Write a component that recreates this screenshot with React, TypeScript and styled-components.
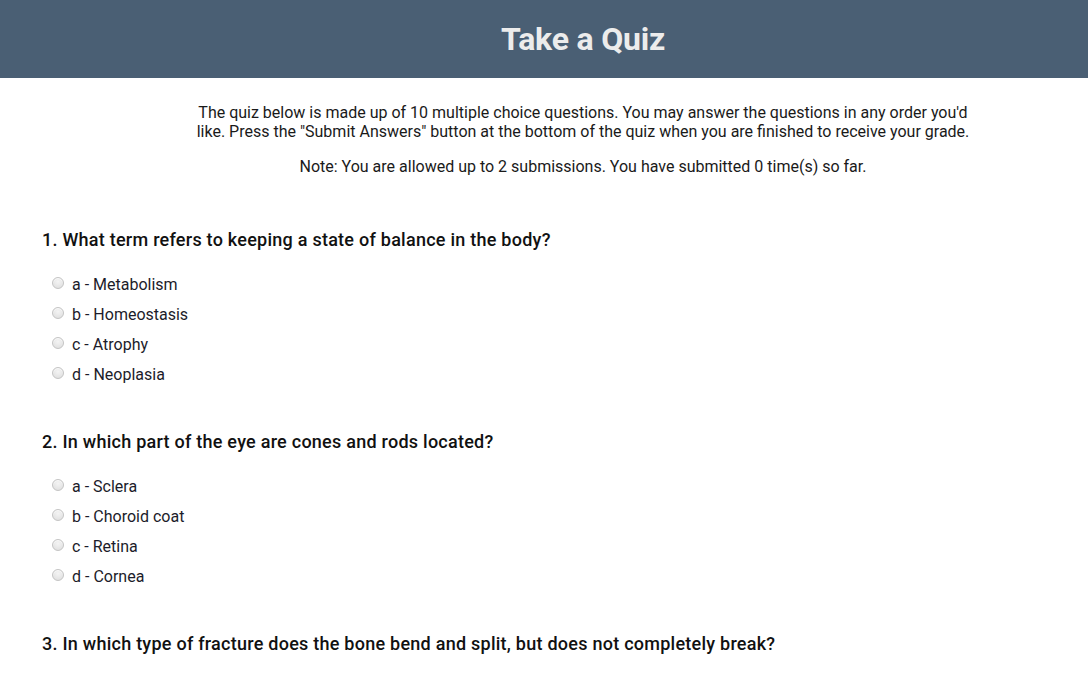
import React from "react";
import styled, { createGlobalStyle } from "styled-components";

// Data

type Question = {
  id: number;
  text: string;
  options: string[];
};

const questions: Question[] = [
  {
    id: 1,
    text: "What term refers to keeping a state of balance in the body?",
    options: ["Metabolism", "Homeostasis", "Atrophy", "Neoplasia"],
  },
  {
    id: 2,
    text: "In which part of the eye are cones and rods located?",
    options: ["Sclera", "Choroid coat", "Retina", "Cornea"],
  },
  {
    id: 3,
    text: "In which type of fracture does the bone bend and split, but does not completely break?",
    options: ["Greenstick", "Comminuted", "Compound", "Spiral"],
  },
];

const letters = ["a", "b", "c", "d"];

// Styled Components

const GlobalStyle = createGlobalStyle`
  body {
    margin: 0;
    background: #fff;
    font-family: Roboto, "Liberation Sans", sans-serif;
    color: #222;
  }
`;

const Header = styled.header`
  height: 78px;
  background: #4a5f74;
  display: flex;
  align-items: center;
  justify-content: center;
  padding-left: 78px;
`;

const Title = styled.h1`
  margin: 0;
  font-size: 32px;
  font-weight: 700;
  color: #ececec;
  letter-spacing: -0.2px;
`;

const IntroWrap = styled.section`
  padding: 25px 0 0 78px;
`;

const Intro = styled.div`
  width: 785px;
  margin: 0 auto;
  text-align: center;
  font-size: 16px;
  line-height: 19px;
  color: #1a1a1a;
`;

const IntroText = styled.p`
  margin: 0 0 16px;

  &:last-child {
    margin-bottom: 0;
  }
`;

const QuizForm = styled.form`
  padding: 53px 42px 0;
`;

const QuestionBlock = styled.fieldset`
  border: 0;
  margin: 0 0 42px;
  padding: 0;
`;

const QuestionTitle = styled.legend`
  padding: 0;
  font-size: 18px;
  line-height: 22px;
  font-weight: 500;
  letter-spacing: 0.25px;
  color: #111;
  margin-bottom: 18px;
`;

const OptionRow = styled.label`
  display: flex;
  align-items: center;
  height: 30px;
  padding-left: 10px;
  font-size: 16px;
  color: #1c1c2a;
  cursor: pointer;
`;

const Radio = styled.input.attrs({ type: "radio" })`
  appearance: none;
  width: 12px;
  height: 12px;
  margin: 0 8px 2px 0;
  border-radius: 50%;
  border: 1px solid #c4c4c4;
  background: radial-gradient(circle at 50% 35%, #f4f4f4 0%, #dcdcdc 100%);
  box-shadow: inset 0 1px 1px rgba(255, 255, 255, 0.8);
`;

// Functional Components

const QuestionItem = ({ q }: { q: Question }) => (
  <QuestionBlock>
    <QuestionTitle>
      {q.id}. {q.text}
    </QuestionTitle>
    {q.options.map((opt, i) => (
      <OptionRow key={opt}>
        <Radio name={`q${q.id}`} value={letters[i]} />
        {letters[i]} - {opt}
      </OptionRow>
    ))}
  </QuestionBlock>
);

export default function App() {
  return (
    <>
      <GlobalStyle />
      <Header>
        <Title>Take a Quiz</Title>
      </Header>
      <IntroWrap>
        <Intro>
          <IntroText>
            The quiz below is made up of 10 multiple choice questions. You may
            answer the questions in any order you'd like. Press the "Submit
            Answers" button at the bottom of the quiz when you are finished to
            receive your grade.
          </IntroText>
          <IntroText>
            Note: You are allowed up to 2 submissions. You have submitted 0
            time(s) so far.
          </IntroText>
        </Intro>
      </IntroWrap>
      <QuizForm>
        {questions.map((q) => (
          <QuestionItem key={q.id} q={q} />
        ))}
      </QuizForm>
    </>
  );
}
